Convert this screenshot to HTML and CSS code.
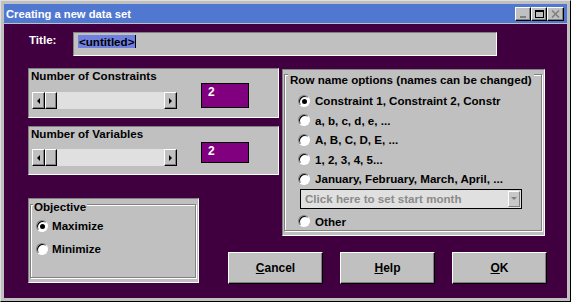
FILE: index.html
```html
<!DOCTYPE html>
<html lang="en">
<head>
    <meta charset="UTF-8">
    <title>Creating a new data set</title>
    <link rel="stylesheet" href="styles.css">
</head>
<body>
    <div class="window">
        <div class="titlebar">
            <span class="title-text">Creating a new data set</span>
            <div class="tb-buttons">
                <span class="tb-btn tb-min"><i></i></span>
                <span class="tb-btn tb-max"><i></i></span>
                <span class="tb-btn tb-close">
                    <svg width="9" height="8" viewBox="0 0 9 8"><path d="M1 0.5 L8 7.5 M8 0.5 L1 7.5" stroke="#808080" stroke-width="1.6"/></svg>
                </span>
            </div>
        </div>

        <div class="client">
            <div class="title-row">
                <span class="title-label">Title:</span>
                <div class="field"><span class="sel">&lt;untitled&gt;</span><span class="caret"></span></div>
            </div>

            <div class="main">
                <div class="panel cons">
                    <div class="panel-label">Number of Constraints</div>
                    <div class="ctrl-row">
                        <div class="scroll">
                            <span class="sb-btn"><i class="arr-l"></i></span>
                            <span class="sb-thumb"></span>
                            <span class="sb-track"></span>
                            <span class="sb-btn"><i class="arr-r"></i></span>
                        </div>
                        <div class="value">2</div>
                    </div>
                </div>

                <div class="panel vars">
                    <div class="panel-label">Number of Variables</div>
                    <div class="ctrl-row">
                        <div class="scroll">
                            <span class="sb-btn"><i class="arr-l"></i></span>
                            <span class="sb-thumb"></span>
                            <span class="sb-track"></span>
                            <span class="sb-btn"><i class="arr-r"></i></span>
                        </div>
                        <div class="value short">2</div>
                    </div>
                </div>

                <div class="panel obj">
                    <div class="group">
                        <span class="group-label">Objective</span>
                        <div class="opts obj-opts">
                            <div class="opt"><span class="radio on"></span>Maximize</div>
                            <div class="opt"><span class="radio"></span>Minimize</div>
                        </div>
                    </div>
                </div>

                <div class="panel rows">
                    <div class="group">
                        <span class="group-label">Row name options (names can be changed)</span>
                        <div class="opts row-opts">
                            <div class="opt"><span class="radio on"></span>Constraint 1, Constraint 2, Constr</div>
                            <div class="opt"><span class="radio"></span>a, b, c, d, e, ...</div>
                            <div class="opt"><span class="radio"></span>A, B, C, D, E, ...</div>
                            <div class="opt"><span class="radio"></span>1, 2, 3, 4, 5...</div>
                            <div class="opt"><span class="radio"></span>January, February, March, April, ...</div>
                            <div class="combo">
                                <span class="combo-text">Click here to set start month</span>
                                <span class="combo-btn"><i></i></span>
                            </div>
                            <div class="opt other"><span class="radio"></span>Other</div>
                        </div>
                    </div>
                </div>

                <div class="btns">
                    <button class="btn"><u>C</u>ancel</button>
                    <button class="btn"><u>H</u>elp</button>
                    <button class="btn"><u>O</u>K</button>
                </div>
            </div>
        </div>
    </div>
</body>
</html>
```
FILE: styles.css
```css
body {
    margin: 0;
    font-family: "Liberation Sans", Arial, sans-serif;
    font-size: 11.6px;
    font-weight: bold;
    color: #000;
}
.window {
    width: 571px;
    height: 302px;
    box-sizing: border-box;
    background: #c0c0c0;
    border: 1px solid;
    border-color: #dfdfdf #000 #000 #dfdfdf;
    padding: 3px;
    display: flex;
    flex-direction: column;
}
.titlebar {
    height: 19px;
    flex: none;
    margin-bottom: 1px;
    background: #5078d0;
    color: #fff;
    display: flex;
    align-items: center;
    padding-left: 2px;
    font-size: 11.2px;
}
.title-text {
    flex: 1;
}
.tb-buttons {
    display: flex;
    padding-right: 3px;
}
.tb-btn {
    width: 16px;
    height: 14px;
    box-sizing: border-box;
    background: #c0c0c0;
    border: 1px solid;
    border-color: #fff #000 #000 #fff;
    box-shadow: inset -1px -1px #808080;
    display: flex;
    align-items: center;
    justify-content: center;
}
.tb-close {
    width: 17px;
}
.tb-min i {
    width: 6px;
    height: 2px;
    background: #808080;
    margin-top: 6px;
}
.tb-max i {
    width: 9px;
    height: 8px;
    box-sizing: border-box;
    border: 1px solid #000;
    border-top-width: 2px;
}
.client {
    flex: 1;
    background: #400040;
    padding: 8px 0 0 24px;
}
.title-row {
    display: flex;
    align-items: center;
}
.title-label {
    width: 44px;
    padding-left: 1px;
    color: #fff;
    margin-top: -10px;
}
.field {
    width: 424px;
    height: 24px;
    box-sizing: border-box;
    background: #c0c0c0;
    border: 1px solid;
    border-color: #808080 #fff #fff #808080;
    padding: 2px 0 0 4px;
    display: flex;
    align-items: flex-start;
}
.sel {
    background: #7080e0;
    line-height: 13px;
    padding: 0 1px;
}
.caret {
    width: 1px;
    height: 13px;
    background: #000;
}
.main {
    margin-top: 12px;
    display: grid;
    grid-template-columns: 171px 29px 51px 3px 263px 2px;
    grid-template-rows: 58px 72px 54px 32px;
    grid-template-areas:
        "cons cons cons . rows ."
        "vars vars vars . rows ."
        "obj  .    .    . rows ."
        "obj  .    btns btns btns btns";
}
.panel {
    background: #c0c0c0;
    border: 1px solid;
    border-color: #808080 #fff #fff #808080;
    box-sizing: border-box;
    align-self: start;
}
.cons {
    grid-area: cons;
    height: 50px;
}
.vars {
    grid-area: vars;
    height: 49px;
}
.cons, .vars {
    display: flex;
    flex-direction: column;
    padding-bottom: 8px;
}
.panel-label {
    padding: 0 0 0 2px;
    line-height: 14px;
}
.ctrl-row {
    margin-top: auto;
    display: flex;
    align-items: flex-end;
    padding-left: 3px;
}
.scroll {
    width: 145px;
    height: 17px;
    display: flex;
    background: #e0e0e0;
}
.sb-btn, .sb-thumb {
    width: 13px;
    height: 17px;
    box-sizing: border-box;
    background: #c0c0c0;
    border: 1px solid;
    border-color: #fff #000 #000 #fff;
    box-shadow: inset -1px -1px #808080;
    display: flex;
    align-items: center;
    justify-content: center;
}
.sb-thumb {
    width: 12px;
}
.sb-track {
    flex: 1;
}
.arr-l, .arr-r {
    width: 0;
    height: 0;
    border-top: 3px solid transparent;
    border-bottom: 3px solid transparent;
}
.arr-l {
    border-right: 3px solid #000;
}
.arr-r {
    border-left: 3px solid #000;
}
.value {
    width: 48px;
    height: 25px;
    box-sizing: border-box;
    margin: 0 0 1px 24px;
    background: #800080;
    border: 1px solid #000;
    color: #fff;
    font-size: 12px;
    padding: 1px 0 0 6px;
}
.value.short {
    height: 21px;
    margin-bottom: 3px;
}
.obj {
    grid-area: obj;
    height: 85px;
}
.rows {
    grid-area: rows;
    height: 167px;
    margin-top: 1px;
}
.group {
    border: 1px solid #808080;
    box-shadow: inset 1px 1px #fff, 1px 1px #fff;
    margin: 5px 2px 2px 1px;
    height: calc(100% - 9px);
    box-sizing: border-box;
    display: flex;
    flex-direction: column;
    align-items: flex-start;
}
.group-label {
    background: #c0c0c0;
    line-height: 14px;
    padding: 0 1px;
    margin: -5px 0 0 2px;
}
.rows .group {
    margin-top: 4px;
    height: calc(100% - 8px);
}
.rows .group-label {
    margin: -2px 0 0 3px;
    padding: 0 2px;
}
.opts {
    display: flex;
    flex-direction: column;
}
.opt {
    display: flex;
    align-items: center;
    gap: 4px;
}
.obj-opts {
    padding-left: 5px;
}
.obj-opts .opt {
    height: 23px;
}
.row-opts {
    padding: 4px 0 0 13px;
}
.row-opts .opt {
    height: 19.5px;
    gap: 5px;
}
.row-opts .other {
    margin-top: 3px;
}
.radio {
    width: 12px;
    height: 12px;
    box-sizing: border-box;
    border-radius: 50%;
    background: #fff;
    border: 1px solid;
    border-color: #808080 #fff #fff #808080;
    box-shadow: inset 1px 1px #000;
    display: flex;
    align-items: center;
    justify-content: center;
}
.radio.on::after {
    content: "";
    width: 5px;
    height: 5px;
    border-radius: 50%;
    background: #000;
    margin: 1px 0 0 1px;
}
.combo {
    width: 222px;
    height: 20px;
    box-sizing: border-box;
    margin-left: 2px;
    border: 1px solid #000;
    background: #e0e0e0;
    display: flex;
    align-items: center;
    padding: 0 1px 0 4px;
}
.combo-text {
    flex: 1;
    color: #8a8a8a;
}
.combo-btn {
    width: 12px;
    height: 16px;
    box-sizing: border-box;
    background: #c8c8c8;
    border: 1px solid;
    border-color: #fff #808080 #808080 #fff;
    display: flex;
    align-items: center;
    justify-content: center;
}
.combo-btn i {
    width: 0;
    height: 0;
    border-left: 3px solid transparent;
    border-right: 3px solid transparent;
    border-top: 3px solid #808080;
}
.btns {
    grid-area: btns;
    display: flex;
    gap: 17px;
    align-items: flex-start;
}
.btn {
    width: 95px;
    height: 32px;
    box-sizing: border-box;
    background: #c0c0c0;
    border: 1px solid;
    border-color: #fff #000 #000 #fff;
    box-shadow: inset -1px -1px #808080;
    font: inherit;
    font-size: 12px;
    padding: 0;
}
```
